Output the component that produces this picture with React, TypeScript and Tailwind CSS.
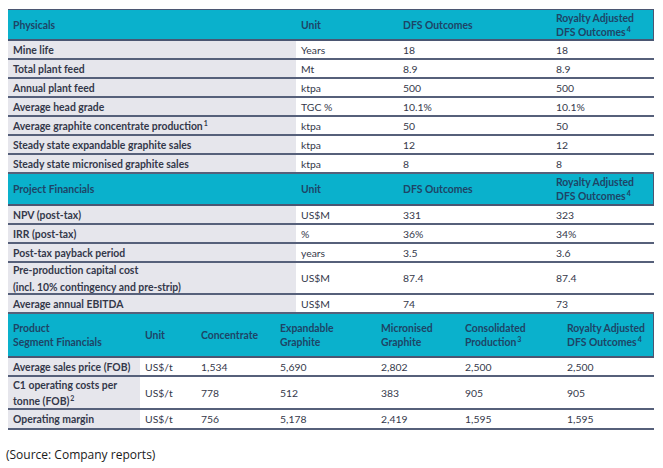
const physicals = [
  { label: "Mine life", unit: "Years", dfs: "18", roy: "18" },
  { label: "Total plant feed", unit: "Mt", dfs: "8.9", roy: "8.9" },
  { label: "Annual plant feed", unit: "ktpa", dfs: "500", roy: "500" },
  { label: "Average head grade", unit: "TGC %", dfs: "10.1%", roy: "10.1%" },
  { label: "Average graphite concentrate production", sup: "1", unit: "ktpa", dfs: "50", roy: "50" },
  { label: "Steady state expandable graphite sales", unit: "ktpa", dfs: "12", roy: "12" },
  { label: "Steady state micronised graphite sales", unit: "ktpa", dfs: "8", roy: "8" },
];

const financials = [
  { label: "NPV (post-tax)", unit: "US$M", dfs: "331", roy: "323", h: "h-[19px]" },
  { label: "IRR (post-tax)", unit: "%", dfs: "36%", roy: "34%", h: "h-[19px]" },
  { label: "Post-tax payback period", unit: "years", dfs: "3.5", roy: "3.6", h: "h-[19px]" },
  { label: "Pre-production capital cost", label2: "(incl. 10% contingency and pre-strip)", unit: "US$M", dfs: "87.4", roy: "87.4", h: "h-[32px]" },
  { label: "Average annual EBITDA", unit: "US$M", dfs: "74", roy: "73", h: "h-[19px]" },
];

const segments = [
  { label: "Average sales price (FOB)", vals: ["US$/t", "1,534", "5,690", "2,802", "2,500", "2,500"], h: "h-[19px]" },
  { label: "C1 operating costs per", label2: "tonne (FOB)", sup: "2", vals: ["US$/t", "778", "512", "383", "905", "905"], h: "h-[33px]" },
  { label: "Operating margin", vals: ["US$/t", "756", "5,178", "2,419", "1,595", "1,595"], h: "h-[20px]" },
];

const segCols = ["w-[132px]", "w-[56px]", "w-[79px]", "w-[101px]", "w-[84px]", "w-[102px]", "flex-1"];

const Sup = ({ n }: { n: string }) => (
  <span className="text-[7px] leading-none ml-[1px] relative -top-[4px]">{n}</span>
);

const App = () => {
  return (
    <div className="w-[663px] h-[468px] bg-white text-[10.4px] leading-[14px] pt-[9px] pl-[8px]" style={{ fontFamily: "Lato, 'Noto Sans', sans-serif" }}>
      <div className="w-[646px] text-[#34384a]">
        {/* Physicals */}
        <div className="flex h-[32px] items-center bg-[#0ab1cc] border-t border-b-2 border-r border-[#4b5672] font-bold text-[#1e4466]">
          <div className="w-[288px] pl-[5px]">Physicals</div>
          <div className="w-[102px] pl-[5px]">Unit</div>
          <div className="w-[153px] pl-[5px]">DFS Outcomes</div>
          <div className="flex-1 pl-[5px]">
            Royalty Adjusted
            <br />
            DFS Outcomes<Sup n="4" />
          </div>
        </div>
        {physicals.map((r) => (
          <div key={r.label} className="flex h-[19px] border-b-2 border-[#56607a]">
            <div className="w-[288px] pl-[5px] bg-[#e6e6ec] font-bold flex items-center">
              <span>
                {r.label}
                {r.sup && <Sup n={r.sup} />}
              </span>
            </div>
            <div className="w-[102px] pl-[5px] flex items-center">{r.unit}</div>
            <div className="w-[153px] pl-[5px] flex items-center">{r.dfs}</div>
            <div className="flex-1 pl-[5px] flex items-center">{r.roy}</div>
          </div>
        ))}

        {/* Project Financials */}
        <div className="flex h-[32px] items-center bg-[#0ab1cc] border-b-2 border-r border-[#4b5672] font-bold text-[#1e4466]">
          <div className="w-[288px] pl-[5px]">Project Financials</div>
          <div className="w-[102px] pl-[5px]">Unit</div>
          <div className="w-[153px] pl-[5px]">DFS Outcomes</div>
          <div className="flex-1 pl-[5px]">
            Royalty Adjusted
            <br />
            DFS Outcomes<Sup n="4" />
          </div>
        </div>
        {financials.map((r) => (
          <div key={r.label} className={`flex border-b-2 border-[#56607a] ${r.h}`}>
            <div className="w-[288px] pl-[5px] bg-[#e6e6ec] font-bold flex flex-col justify-center">
              <span>{r.label}</span>
              {r.label2 && <span className="mt-[3px]">{r.label2}</span>}
            </div>
            <div className="w-[102px] pl-[5px] flex items-center">{r.unit}</div>
            <div className="w-[153px] pl-[5px] flex items-center">{r.dfs}</div>
            <div className="flex-1 pl-[5px] flex items-center">{r.roy}</div>
          </div>
        ))}

        {/* Product Segment Financials */}
        <div className="flex h-[44px] items-center bg-[#0ab1cc] border-b-2 border-r border-[#4b5672] font-bold text-[#1e4466]">
          <div className={`${segCols[0]} pl-[5px]`}>
            Product
            <br />
            Segment Financials
          </div>
          <div className={`${segCols[1]} pl-[5px]`}>Unit</div>
          <div className={`${segCols[2]} pl-[5px]`}>Concentrate</div>
          <div className={`${segCols[3]} pl-[5px]`}>
            Expandable
            <br />
            Graphite
          </div>
          <div className={`${segCols[4]} pl-[5px]`}>
            Micronised
            <br />
            Graphite
          </div>
          <div className={`${segCols[5]} pl-[5px]`}>
            Consolidated
            <br />
            Production<Sup n="3" />
          </div>
          <div className={`${segCols[6]} pl-[5px]`}>
            Royalty Adjusted
            <br />
            DFS Outcomes<Sup n="4" />
          </div>
        </div>
        {segments.map((r) => (
          <div key={r.label} className={`flex border-b-2 border-[#56607a] ${r.h}`}>
            <div className={`${segCols[0]} pl-[5px] bg-[#e6e6ec] font-bold flex flex-col justify-center`}>
              <span>{r.label}</span>
              {r.label2 && (
                <span className="mt-[2px]">
                  {r.label2}
                  {r.sup && <Sup n={r.sup} />}
                </span>
              )}
            </div>
            {r.vals.map((v, i) => (
              <div key={i} className={`${segCols[i + 1]} pl-[5px] flex items-center`}>
                {v}
              </div>
            ))}
          </div>
        ))}
      </div>
      <p className="mt-[18px] -ml-[2px] text-[12px] text-[#1a1a1a]" style={{ fontFamily: "'Open Sans', Lato, sans-serif" }}>
        (Source: Company reports)
      </p>
    </div>
  );
};

export default App;
